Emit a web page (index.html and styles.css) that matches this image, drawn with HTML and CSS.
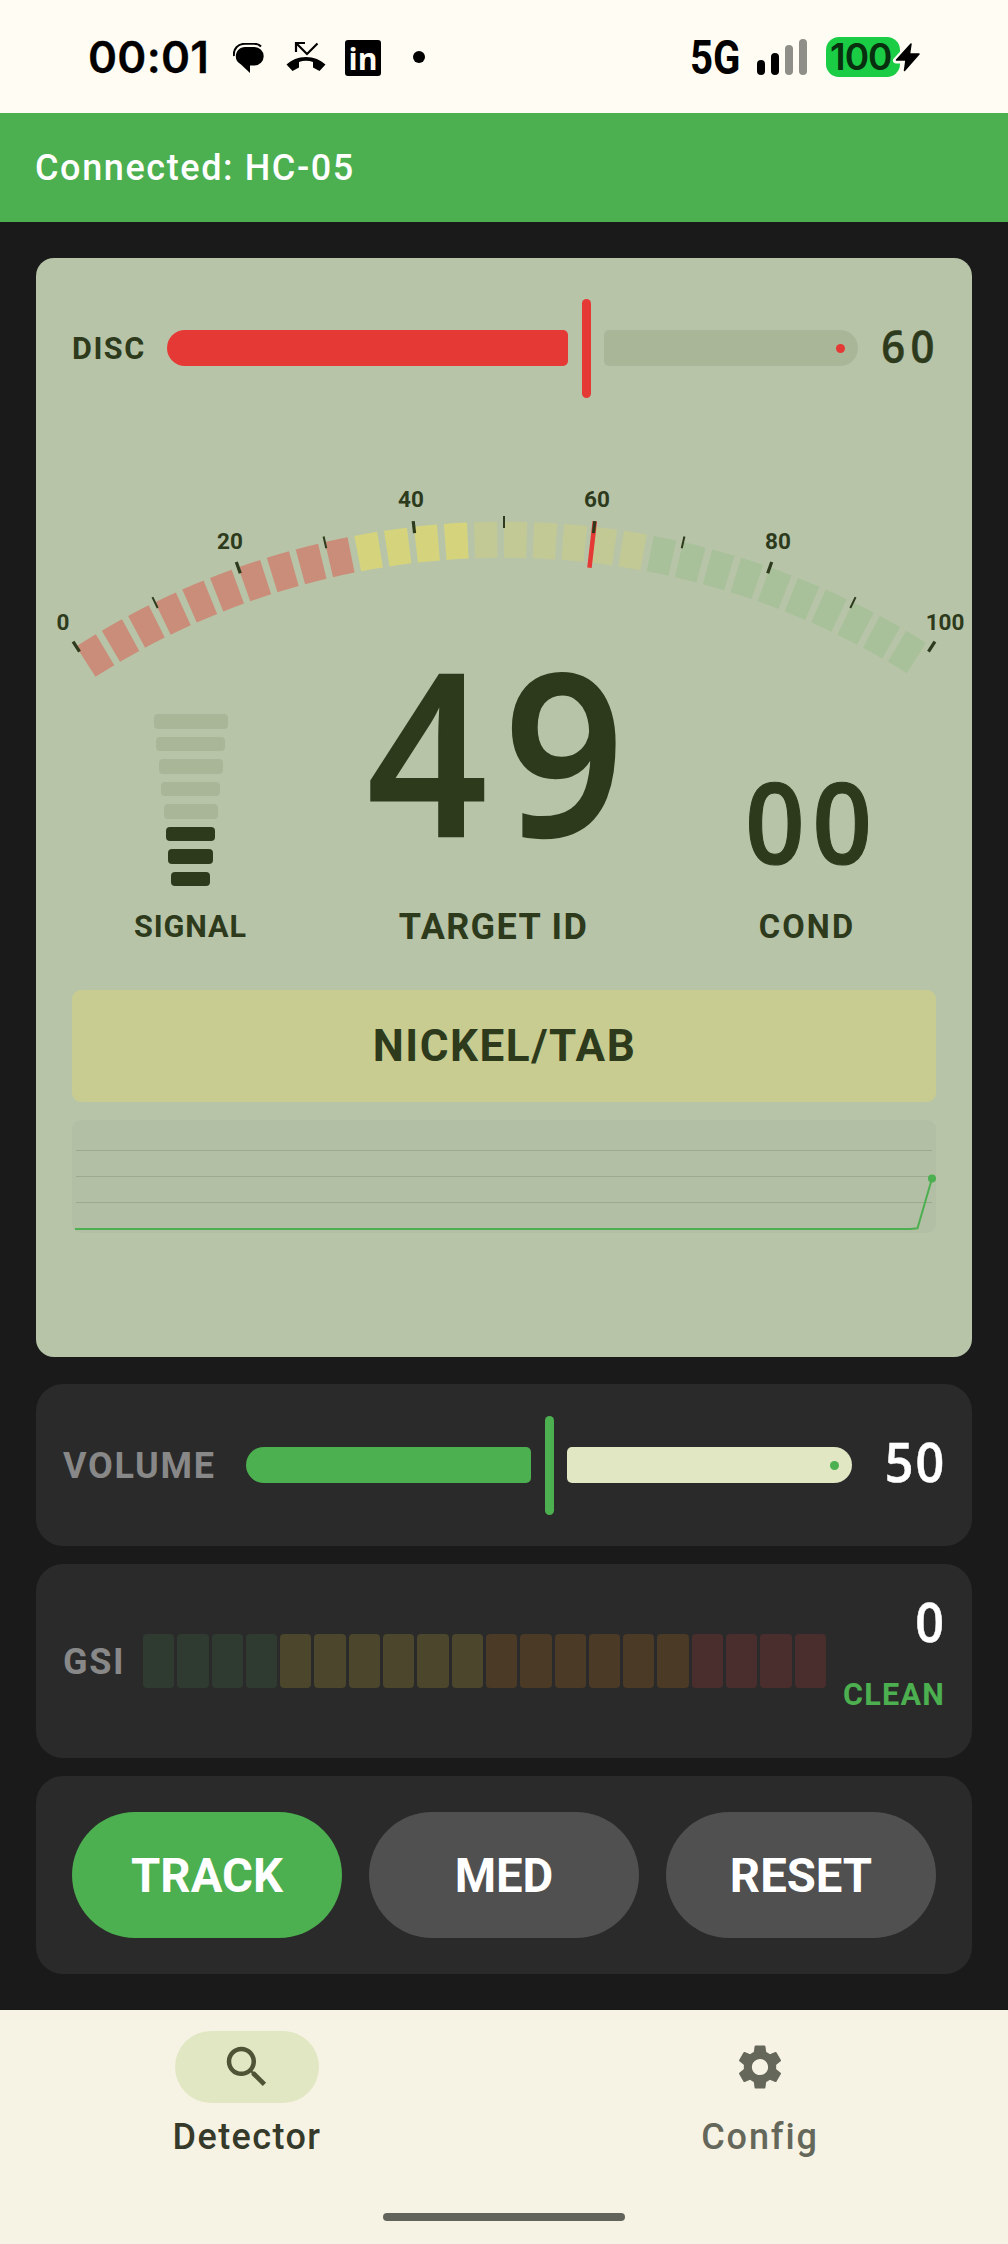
FILE: index.html
```html
<!DOCTYPE html>
<html lang="en">
<head>
<meta charset="utf-8">
<title>Detector</title>
<link rel="stylesheet" href="styles.css">
</head>
<body>
<div class="screen">
  <header class="status">
    <span class="clock">00:01</span>
    <svg class="ic-chat" width="32" height="31" viewBox="0 0 32 31"><path d="M1 13C0 6 5 .8 12 .8h9c3 0 5.500 1 7 2.700" fill="none" stroke="#000" stroke-width="2"/><path d="M12 4h9.500a9.200 9.200 0 0 1 0 18.400H17V30L8 21.500C4.500 19 2.800 17 2.800 13.500 2.800 8 7 4 12 4z"/></svg>
    <svg class="ic-call" width="40" height="32" viewBox="0 0 40 32"><path d="M10 11V2h9M10 2l11 11L31.500 2.500" fill="none" stroke="#000" stroke-width="2.200"/><path d="M20 16c8 0 14.500 3 19.500 7.500L33.500 30 27 26.500V21c-4.500-1.700-9.500-1.700-14 0v5.500L6.500 30 .5 23.500C5.500 19 12 16 20 16z"/></svg>
    <svg class="ic-in" width="36" height="36" viewBox="0 0 36 36"><rect width="36" height="36" rx="3"/><text x="3.500" y="30" textLength="29" lengthAdjust="spacingAndGlyphs">in</text></svg>
    <span class="more"></span>
    <span class="net"><b>5G</b></span>
    <svg class="bars" width="51" height="36" viewBox="0 0 51 36"><rect y="21" width="8" height="15" rx="4"/><rect x="14" y="14" width="8" height="22" rx="4"/><rect x="28" y="6" width="8" height="30" rx="4" fill="#8f8e88"/><rect x="42" width="8" height="36" rx="4" fill="#8f8e88"/></svg>
    <span class="battery"><span>100</span><svg width="34" height="40" viewBox="0 0 34 40"><path d="M20.500 6.500 5 23.500h9.500L13 34l15.500-17h-9.500z" stroke="#fffcf3" stroke-width="6" stroke-linejoin="round"/><path d="M20 7 5.500 23H15l-1.500 10.500L28 17h-9.500z" stroke="#000" stroke-width="1.500" stroke-linejoin="round"/></svg></span>
  </header>
  <div class="banner">Connected: HC-05</div>
  <main class="main">
    <section class="lcd">
      <div class="disc">
        <span class="disc-label">DISC</span>
        <div class="slider red"><i class="on"></i><i class="thumb"></i><i class="off"></i></div>
        <span class="disc-val mono">60</span>
      </div>
      <svg class="gauge" width="864" height="250" viewBox="0 0 864 250">
        <g transform="translate(432 916)">
          <g fill="none" stroke-width="36" stroke-dasharray="1.6667 .5">
            <path stroke="#ca8d79" pathLength="21.6667" d="M-418.180-656.410A778.300 778.300 0 0 1-146.280-764.430"/>
            <path stroke="#d5d47d" pathLength="8.6667" d="M-146.280-764.430A778.300 778.300 0 0 1-29.430-777.740"/>
            <path stroke="#c3c994" pathLength="13" d="M-29.430-777.740A778.300 778.300 0 0 1 146.280-764.430"/>
            <path stroke="#a8c19a" pathLength="21.6667" d="M146.280-764.430A778.300 778.300 0 0 1 418.180-656.410"/>
          </g>
          <line class="needle" y1="-802" y2="-755" transform="rotate(6.500)"/>
          <g class="major">
            <line y1="-802" y2="-790" transform="rotate(-32.500)"/><line y1="-802" y2="-790" transform="rotate(-19.500)"/><line y1="-802" y2="-790" transform="rotate(-6.500)"/><line y1="-802" y2="-790" transform="rotate(6.500)"/><line y1="-802" y2="-790" transform="rotate(19.500)"/><line y1="-802" y2="-790" transform="rotate(32.500)"/>
          </g>
          <g class="minor">
            <line y1="-802" y2="-790" transform="rotate(-26)"/><line y1="-802" y2="-790" transform="rotate(-13)"/><line y1="-802" y2="-790"/><line y1="-802" y2="-790" transform="rotate(13)"/><line y1="-802" y2="-790" transform="rotate(26)"/>
          </g>
          <g class="nums"><text x="-441" y="-688">0</text><text x="-274" y="-769">20</text><text x="-93" y="-811">40</text><text x="93" y="-811">60</text><text x="274" y="-769">80</text><text x="441" y="-688">100</text></g>
        </g>
      </svg>
      <div class="readouts">
        <div class="col">
          <div class="signal"><i></i><i></i><i></i><i></i><i></i><i class="lit"></i><i class="lit"></i><i class="lit"></i></div>
          <span class="label lb-signal">SIGNAL</span>
        </div>
        <div class="col"><span class="big mono">49</span><span class="label lb-target">TARGET ID</span></div>
        <div class="col"><span class="mid mono">00</span><span class="label lb-cond">COND</span></div>
      </div>
      <div class="verdict">NICKEL/TAB</div>
      <svg class="chart" width="864" height="113" viewBox="0 0 864 113">
        <rect width="864" height="113" rx="9" fill="#b3bfa4"/>
        <path d="M4 30.500H860M4 56.500H860M4 82.500H860" stroke="#9ca98c"/>
        <path d="M3 109H838L845.500 108.300 860 58.500" fill="none" stroke="#4caf50" stroke-width="2"/>
        <circle cx="860" cy="58.500" r="4" fill="#4caf50"/>
      </svg>
    </section>
    <section class="card volume">
      <span class="cap">VOLUME</span>
      <div class="slider green"><i class="on"></i><i class="thumb"></i><i class="off"></i></div>
      <span class="val mono">50</span>
    </section>
    <section class="card gsi">
      <span class="cap">GSI</span>
      <div class="segs"><i class="g"></i><i class="g"></i><i class="g"></i><i class="g"></i><i class="y"></i><i class="y"></i><i class="y"></i><i class="y"></i><i class="y"></i><i class="y"></i><i class="o"></i><i class="o"></i><i class="o"></i><i class="o"></i><i class="o"></i><i class="o"></i><i class="r"></i><i class="r"></i><i class="r"></i><i class="r"></i></div>
      <div class="gsi-state"><span class="val mono">0</span><span class="clean">CLEAN</span></div>
    </section>
    <section class="card actions">
      <button class="btn primary">TRACK</button>
      <button class="btn">MED</button>
      <button class="btn">RESET</button>
    </section>
  </main>
  <nav class="nav">
    <a class="tab active"><span class="pill"><svg width="54" height="54" viewBox="0 0 24 24"><path d="M15.500 14h-.79l-.28-.27C15.410 12.590 16 11.110 16 9.500 16 5.910 13.090 3 9.500 3S3 5.910 3 9.500 5.910 16 9.500 16c1.610 0 3.090-.59 4.230-1.570l.27.28v.79l5 4.990L20.490 19l-4.990-5zm-6 0C7.010 14 5 11.990 5 9.500S7.010 5 9.500 5 14 7.010 14 9.500 11.990 14 9.500 14z"/></svg></span><span class="tab-label">Detector</span></a>
    <a class="tab"><span class="pill"><svg width="54" height="54" viewBox="0 0 24 24"><path d="M19.140 12.940c.04-.3.06-.61.06-.94 0-.32-.02-.64-.07-.94l2.030-1.580c.18-.14.23-.41.12-.61l-1.920-3.320c-.12-.22-.37-.29-.59-.22l-2.390.96c-.5-.38-1.030-.7-1.620-.94L14.400 2.810c-.04-.24-.24-.41-.48-.41h-3.840c-.24 0-.43.17-.47.41L9.250 5.350C8.660 5.590 8.120 5.920 7.630 6.290L5.240 5.330c-.22-.08-.47 0-.59.22L2.740 8.870c-.12.21-.08.47.12.61l2.030 1.580C4.840 11.360 4.800 11.690 4.800 12s.02.64.07.94l-2.030 1.580c-.18.14-.23.41-.12.61l1.920 3.320c.12.22.37.29.59.22l2.390-.96c.5.38 1.030.7 1.620.94l.36 2.540c.05.24.24.41.48.41h3.840c.24 0 .44-.17.47-.41l.36-2.540c.59-.24 1.130-.56 1.620-.94l2.390.96c.22.08.47 0 .59-.22l1.920-3.320c.12-.22.07-.47-.12-.61L19.140 12.940zM12 15.600c-1.980 0-3.600-1.620-3.600-3.600s1.620-3.600 3.600-3.600 3.600 1.620 3.600 3.600-1.620 3.600-3.600 3.600z"/></svg></span><span class="tab-label wide">Config</span></a>
    <span class="gesture"></span>
  </nav>
</div>
</body>
</html>
```
FILE: styles.css
```css
* { box-sizing: border-box; }
body { margin: 0; background: #1a1a1a; font-family: Roboto, "Liberation Sans", sans-serif; }
.screen { width: 1008px; height: 2244px; display: flex; flex-direction: column; overflow: hidden; }
.mono { display: block; font-family: "Open Sans", "Noto Sans", sans-serif; font-weight: 600; white-space: nowrap; transform: scaleX(.93); -webkit-text-stroke: .01em currentColor; }

.status { height: 113px; background: #fffcf3; display: flex; align-items: center; padding: 0 88px; }
.clock { font: 600 44px/50px Inter, sans-serif; letter-spacing: .3px; width: 121px; white-space: nowrap; -webkit-text-stroke: .3px #000; }
.ic-chat { margin: 3px 0 0 24px; }
.ic-call { margin-left: 21px; }
.ic-in { margin: 2px 0 0 19px; overflow: visible; }
.ic-in text { font: 700 31px "Open Sans", sans-serif; fill: #fffcf3; }
.more { width: 12px; height: 12px; border-radius: 6px; background: #000; margin-left: 32px; }
.net { margin: 3px 0 0 auto; width: 51px; font-size: 49px; line-height: 50px; }
.net b { display: inline-block; transform: scaleX(.82); transform-origin: 0 50%; }
.bars { margin: 0 18px 0 16px; }
.battery { position: relative; width: 74px; height: 40px; border-radius: 13px; background: #1acd45; color: #08300f; font: 600 37px/40px Inter, sans-serif; padding-left: 4px; letter-spacing: -1px; margin-right: 20px; }
.battery svg { position: absolute; left: 65px; top: 0; }

.banner { height: 109px; background: #4caf50; color: #fff; display: flex; align-items: center; padding: 0 35px; font-size: 36px; font-weight: 500; letter-spacing: 1.6px; }

.main { flex: 1; padding: 36px; display: flex; flex-direction: column; gap: 18px; }
.lcd { height: 1099px; margin-bottom: 9px; border-radius: 18px; background: #b7c4a8; color: #2d3a1c; padding: 36px; display: flex; flex-direction: column; }
.disc { height: 108px; display: flex; align-items: center; }
.disc-label { width: 95px; font-size: 30.6px; font-weight: 700; letter-spacing: 1.5px; }
.disc-val { font-size: 45px; letter-spacing: 5.5px; margin: 0 -3.5px 6px auto; transform-origin: 100% 50%; }

.slider { display: flex; align-items: center; }
.slider i { display: block; height: 36px; }
.slider .on { border-radius: 18px 5px 5px 18px; background: currentColor; }
.slider .thumb { width: 9px; height: 99px; border-radius: 5px; margin: 0 13px 0 14px; background: currentColor; }
.slider .off { border-radius: 5px 18px 18px 5px; display: flex; align-items: center; justify-content: flex-end; padding-right: 13.5px; }
.slider .off::after { content: ""; width: 9px; height: 9px; border-radius: 50%; background: currentColor; }
.red { color: #e53935; }
.red .on { width: 401px; }
.red .off { width: 254px; background: #aab698; }
.green { color: #4caf50; }
.green .on { width: 285px; }
.green .off { width: 285px; background: #e1e6c3; }

.gauge { display: block; overflow: visible; }
.needle { stroke: #e53935; stroke-width: 4.5; }
.major { stroke: #2d3a1c; stroke-width: 3.2; }
.minor { stroke: #2d3a1c; stroke-width: 2; }
.nums { font-size: 22.5px; font-weight: 700; fill: #2d3a1c; text-anchor: middle; }

.readouts { height: 302px; display: grid; grid-template-columns: 237px 369px 258px; align-items: end; }
.col { display: flex; flex-direction: column; align-items: center; }
.signal { display: flex; flex-direction: column; align-items: center; gap: 8px; margin-bottom: 14px; }
.signal i { height: 14.5px; width: 74px; border-radius: 4px; background: #aab698; }
.signal i:nth-child(2) { width: 69px; }
.signal i:nth-child(3) { width: 64px; }
.signal i:nth-child(4) { width: 59px; }
.signal i:nth-child(5) { width: 54px; }
.signal i:nth-child(6) { width: 49px; }
.signal i:nth-child(7) { width: 44.5px; }
.signal i:nth-child(8) { width: 39.5px; }
.signal .lit { background: #2d3a1c; }
.big { font-size: 225px; line-height: 190px; letter-spacing: 18.5px; margin: 0 0 55.9px 20.8px; }
.mid { font-size: 112.5px; line-height: 112px; letter-spacing: 8px; margin: 0 0 23.3px 10px; }
.label { font-weight: 700; line-height: 54px; white-space: nowrap; }
.lb-signal { font-size: 30.6px; letter-spacing: .9px; }
.lb-target { font-size: 36px; letter-spacing: 1.36px; }
.lb-cond { font-size: 32.6px; letter-spacing: 2.2px; }

.verdict { height: 112px; margin-top: 36px; border-radius: 9px; background: #c8cc91; display: flex; align-items: center; justify-content: center; font-size: 44px; font-weight: 700; letter-spacing: 1.55px; padding-left: 1px; }
.chart { display: block; margin-top: 18px; }

.card { border-radius: 27px; background: #2a2a2a; padding: 0 27px; display: flex; align-items: center; }
.cap { font-size: 36px; font-weight: 700; color: #888; letter-spacing: 1.7px; padding-top: 1px; }
.val { font-size: 54px; color: #fff; line-height: 64px; letter-spacing: 2.2px; transform-origin: 100% 50%; margin-right: -1px; }
.volume { height: 162px; }
.volume .cap { width: 183px; }
.volume .val { margin-left: auto; margin-bottom: 9px; }
.gsi { height: 194px; }
.gsi .cap { width: 80px; }
.segs { width: 683px; display: flex; gap: 3px; }
.segs i { flex: 1; height: 54px; border-radius: 4px; }
.g { background: #2f3b30; }
.y { background: #4b462c; }
.o { background: #4a3a26; }
.r { background: #4a2d2d; }
.gsi-state { margin-left: auto; display: flex; flex-direction: column; align-items: flex-end; gap: 24px; padding-bottom: 22px; }
.clean { font-size: 30.6px; font-weight: 700; letter-spacing: 1.2px; color: #4caf50; }
.actions { height: 198px; padding: 0 36px; gap: 27px; }
.btn { flex: 1; height: 126px; border: 0; border-radius: 63px; padding: 2px 0 0; background: #505050; color: #fff; font: 700 47.25px Roboto, sans-serif; }
.primary { background: #4caf50; }

.nav { height: 234px; background: #f6f3e4; position: relative; display: flex; padding: 21px 0 0 22px; }
.tab { width: 450px; margin-right: 63px; flex: none; display: flex; flex-direction: column; align-items: center; gap: 12.6px; font-size: 36px; font-weight: 500; color: #65675a; fill: #65675a; }
.tab.active { color: #363a2a; fill: #4f5437; }
.tab-label { letter-spacing: 1.43px; }
.tab-label.wide { letter-spacing: 1.9px; }
.pill { width: 144px; height: 72px; border-radius: 36px; display: flex; align-items: center; justify-content: center; }
.active .pill { background: #e1e6c3; }
.gesture { position: absolute; left: 383px; top: 203px; width: 242px; height: 8px; border-radius: 4px; background: #62645b; }
```
